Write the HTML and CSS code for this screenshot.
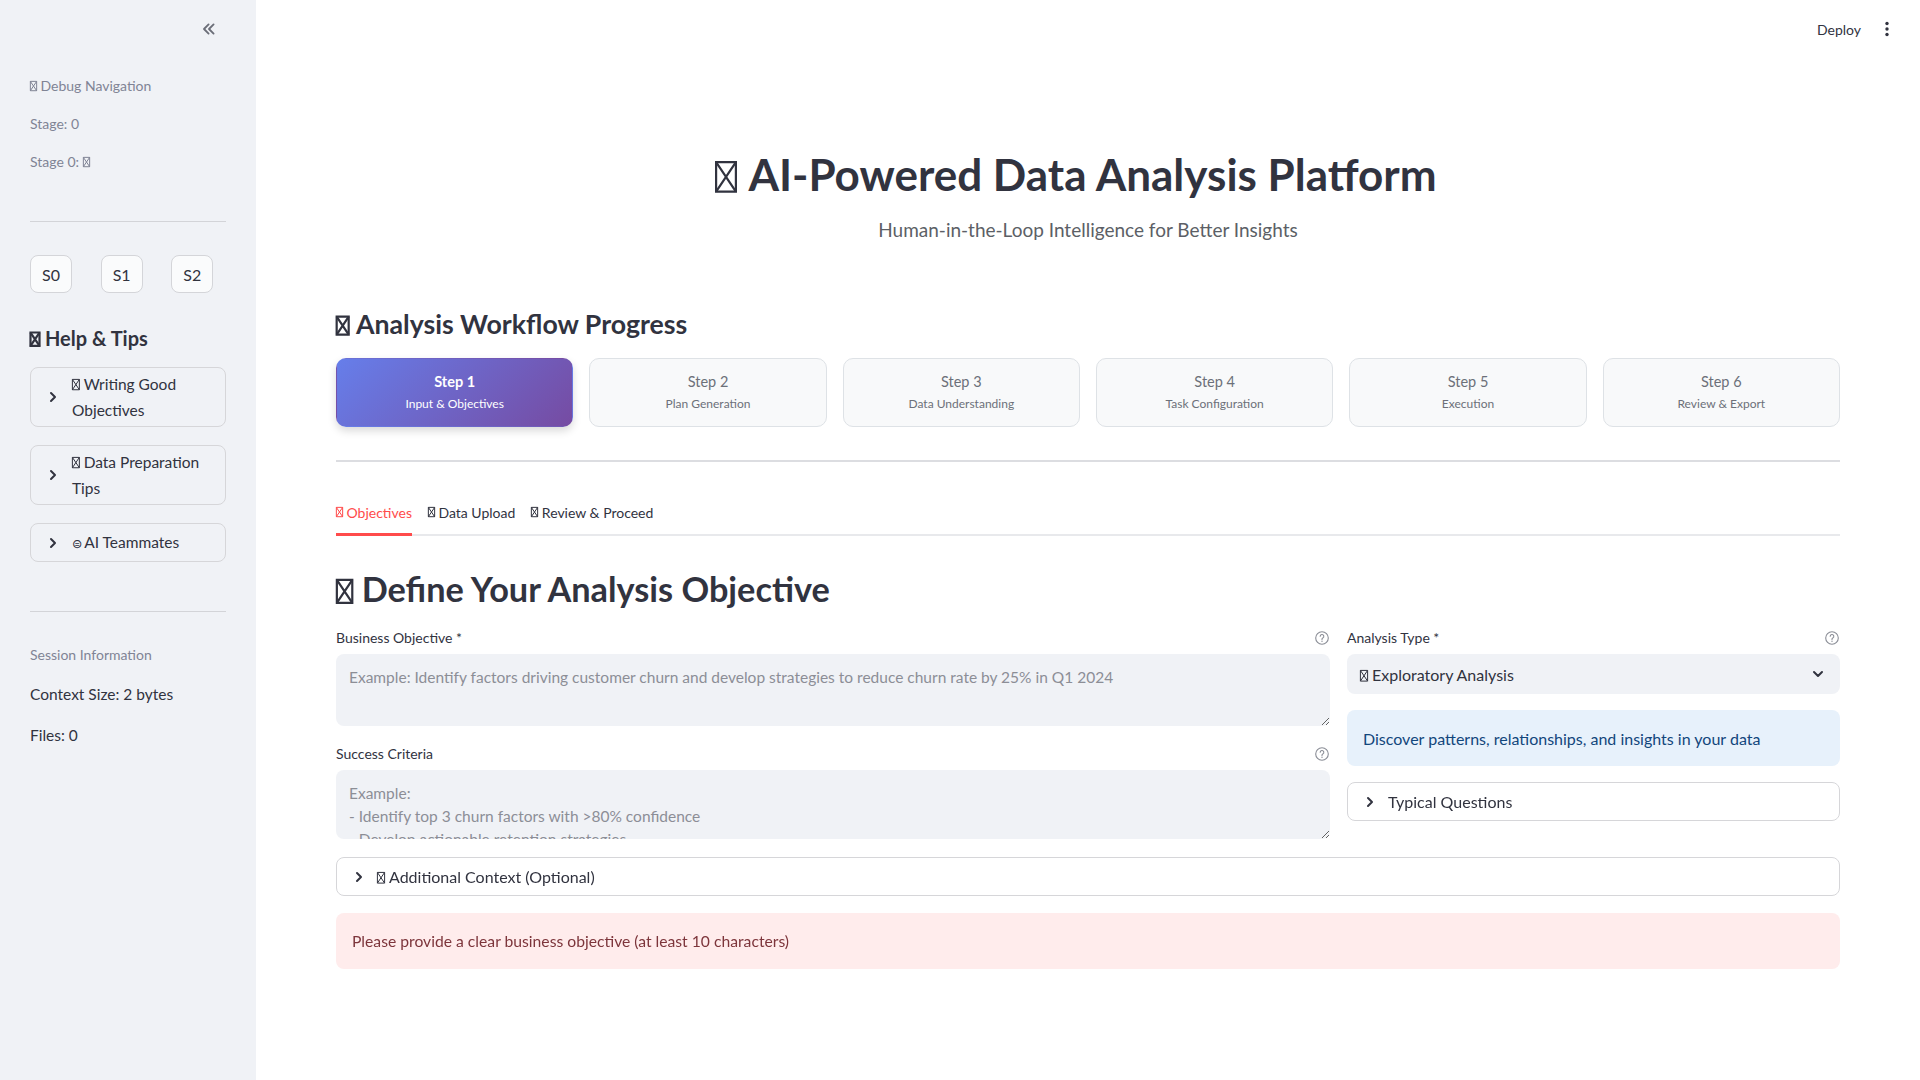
FILE: index.html
```html
<!DOCTYPE html>
<html lang="en">
<head>
<meta charset="utf-8">
<title>AI-Powered Data Analysis Platform</title>
<link rel="stylesheet" href="styles.css">
</head>
<body>
<div class="app">
  <aside class="sidebar">
    <div class="sb-top">
      <svg class="collapse" viewBox="0 0 24 24" width="20" height="20"><path d="M11.5 6.5 6 12l5.5 5.5M17.5 6.5 12 12l5.5 5.5" fill="none" stroke="currentColor" stroke-width="2.2" stroke-linecap="round" stroke-linejoin="round"/></svg>
    </div>
    <div class="sb-body">
      <p class="caption first"><span class="tofu"><svg viewBox="0 0 10 14" preserveAspectRatio="none"><rect x="0.5" y="0.5" width="9" height="13"/><path d="M0.5 0.5 9.5 13.5M9.5 0.5 0.5 13.5"/></svg></span>Debug Navigation</p>
      <p class="caption">Stage: 0</p>
      <p class="caption">Stage 0: <span class="tofu"><svg viewBox="0 0 10 14" preserveAspectRatio="none"><rect x="0.5" y="0.5" width="9" height="13"/><path d="M0.5 0.5 9.5 13.5M9.5 0.5 0.5 13.5"/></svg></span></p>
      <hr class="sb-hr first-hr">
      <div class="btn-row">
        <div class="btn-col"><button class="btn">S0</button></div>
        <div class="btn-col"><button class="btn">S1</button></div>
        <div class="btn-col"><button class="btn">S2</button></div>
      </div>
      <h3 class="sb-h3"><span class="tofu bold"><svg viewBox="0 0 10 14" preserveAspectRatio="none"><rect x="0.5" y="0.5" width="9" height="13"/><path d="M0.5 0.5 9.5 13.5M9.5 0.5 0.5 13.5"/></svg></span>Help &amp; Tips</h3>
      <div class="sb-exp">
        <div class="exp"><svg class="chev" viewBox="0 0 16 16"><path d="M6 4l4 4-4 4" fill="none" stroke="currentColor" stroke-width="2" stroke-linecap="round" stroke-linejoin="round"/></svg><span class="exp-label"><span class="tofu"><svg viewBox="0 0 10 14" preserveAspectRatio="none"><rect x="0.5" y="0.5" width="9" height="13"/><path d="M0.5 0.5 9.5 13.5M9.5 0.5 0.5 13.5"/></svg></span>Writing Good Objectives</span></div>
        <div class="exp"><svg class="chev" viewBox="0 0 16 16"><path d="M6 4l4 4-4 4" fill="none" stroke="currentColor" stroke-width="2" stroke-linecap="round" stroke-linejoin="round"/></svg><span class="exp-label"><span class="tofu"><svg viewBox="0 0 10 14" preserveAspectRatio="none"><rect x="0.5" y="0.5" width="9" height="13"/><path d="M0.5 0.5 9.5 13.5M9.5 0.5 0.5 13.5"/></svg></span>Data Preparation Tips</span></div>
        <div class="exp"><svg class="chev" viewBox="0 0 16 16"><path d="M6 4l4 4-4 4" fill="none" stroke="currentColor" stroke-width="2" stroke-linecap="round" stroke-linejoin="round"/></svg><span class="exp-label"><span class="glyph">⊜</span>AI Teammates</span></div>
      </div>
      <hr class="sb-hr second-hr">
      <p class="caption session">Session Information</p>
      <p class="sb-text">Context Size: 2 bytes</p>
      <p class="sb-text">Files: 0</p>
    </div>
  </aside>

  <main class="main">
    <header class="topbar">
      <span class="deploy">Deploy</span>
      <svg class="menu" viewBox="0 0 4 16" width="4" height="16"><circle cx="2" cy="2.5" r="1.7"/><circle cx="2" cy="8" r="1.7"/><circle cx="2" cy="13.5" r="1.7"/></svg>
    </header>

    <div class="content">
      <h1 class="title"><span class="tofu bold"><svg viewBox="0 0 10 14" preserveAspectRatio="none"><rect x="0.5" y="0.5" width="9" height="13"/><path d="M0.5 0.5 9.5 13.5M9.5 0.5 0.5 13.5"/></svg></span>AI-Powered Data Analysis Platform</h1>
      <p class="subtitle">Human-in-the-Loop Intelligence for Better Insights</p>

      <h3 class="section"><span class="tofu bold"><svg viewBox="0 0 10 14" preserveAspectRatio="none"><rect x="0.5" y="0.5" width="9" height="13"/><path d="M0.5 0.5 9.5 13.5M9.5 0.5 0.5 13.5"/></svg></span>Analysis Workflow Progress</h3>

      <div class="steps">
        <div class="step active"><div class="step-n">Step 1</div><div class="step-t">Input &amp; Objectives</div></div>
        <div class="step"><div class="step-n">Step 2</div><div class="step-t">Plan Generation</div></div>
        <div class="step"><div class="step-n">Step 3</div><div class="step-t">Data Understanding</div></div>
        <div class="step"><div class="step-n">Step 4</div><div class="step-t">Task Configuration</div></div>
        <div class="step"><div class="step-n">Step 5</div><div class="step-t">Execution</div></div>
        <div class="step"><div class="step-n">Step 6</div><div class="step-t">Review &amp; Export</div></div>
      </div>

      <hr class="main-hr">

      <div class="tabs">
        <div class="tab active"><span class="tofu"><svg viewBox="0 0 10 14" preserveAspectRatio="none"><rect x="0.5" y="0.5" width="9" height="13"/><path d="M0.5 0.5 9.5 13.5M9.5 0.5 0.5 13.5"/></svg></span>Objectives</div>
        <div class="tab"><span class="tofu"><svg viewBox="0 0 10 14" preserveAspectRatio="none"><rect x="0.5" y="0.5" width="9" height="13"/><path d="M0.5 0.5 9.5 13.5M9.5 0.5 0.5 13.5"/></svg></span>Data Upload</div>
        <div class="tab"><span class="tofu"><svg viewBox="0 0 10 14" preserveAspectRatio="none"><rect x="0.5" y="0.5" width="9" height="13"/><path d="M0.5 0.5 9.5 13.5M9.5 0.5 0.5 13.5"/></svg></span>Review &amp; Proceed</div>
      </div>

      <h2 class="define"><span class="tofu bold"><svg viewBox="0 0 10 14" preserveAspectRatio="none"><rect x="0.5" y="0.5" width="9" height="13"/><path d="M0.5 0.5 9.5 13.5M9.5 0.5 0.5 13.5"/></svg></span>Define Your Analysis Objective</h2>

      <div class="cols">
        <div class="col-left">
          <div class="label-row"><span class="label">Business Objective *</span><svg class="help" viewBox="0 0 16 16"><circle cx="8" cy="8" r="6.3" fill="none" stroke="currentColor" stroke-width="1.1"/><path d="M6.2 6.3a1.8 1.8 0 1 1 2.6 1.6c-.55.3-.8.6-.8 1.2v.4" fill="none" stroke="currentColor" stroke-width="1.1" stroke-linecap="round"/><circle cx="8" cy="11.2" r=".7" fill="currentColor"/></svg></div>
          <textarea class="ta ta1" placeholder="Example: Identify factors driving customer churn and develop strategies to reduce churn rate by 25% in Q1 2024"></textarea>
          <div class="label-row second"><span class="label">Success Criteria</span><svg class="help" viewBox="0 0 16 16"><circle cx="8" cy="8" r="6.3" fill="none" stroke="currentColor" stroke-width="1.1"/><path d="M6.2 6.3a1.8 1.8 0 1 1 2.6 1.6c-.55.3-.8.6-.8 1.2v.4" fill="none" stroke="currentColor" stroke-width="1.1" stroke-linecap="round"/><circle cx="8" cy="11.2" r=".7" fill="currentColor"/></svg></div>
          <textarea class="ta ta2" placeholder="Example:&#10;- Identify top 3 churn factors with &gt;80% confidence&#10;- Develop actionable retention strategies&#10;- Create predictive model with &gt;85% accuracy"></textarea>
        </div>
        <div class="col-right">
          <div class="label-row"><span class="label">Analysis Type *</span><svg class="help" viewBox="0 0 16 16"><circle cx="8" cy="8" r="6.3" fill="none" stroke="currentColor" stroke-width="1.1"/><path d="M6.2 6.3a1.8 1.8 0 1 1 2.6 1.6c-.55.3-.8.6-.8 1.2v.4" fill="none" stroke="currentColor" stroke-width="1.1" stroke-linecap="round"/><circle cx="8" cy="11.2" r=".7" fill="currentColor"/></svg></div>
          <div class="select"><span><span class="tofu"><svg viewBox="0 0 10 14" preserveAspectRatio="none"><rect x="0.5" y="0.5" width="9" height="13"/><path d="M0.5 0.5 9.5 13.5M9.5 0.5 0.5 13.5"/></svg></span>Exploratory Analysis</span><svg class="chev-down" viewBox="0 0 16 16"><path d="M4 6l4 4 4-4" fill="none" stroke="currentColor" stroke-width="2" stroke-linecap="round" stroke-linejoin="round"/></svg></div>
          <div class="info">Discover patterns, relationships, and insights in your data</div>
          <div class="exp main-exp"><svg class="chev" viewBox="0 0 16 16"><path d="M6 4l4 4-4 4" fill="none" stroke="currentColor" stroke-width="2" stroke-linecap="round" stroke-linejoin="round"/></svg><span class="exp-label">Typical Questions</span></div>
        </div>
      </div>

      <div class="exp main-exp wide"><svg class="chev" viewBox="0 0 16 16"><path d="M6 4l4 4-4 4" fill="none" stroke="currentColor" stroke-width="2" stroke-linecap="round" stroke-linejoin="round"/></svg><span class="exp-label"><span class="tofu"><svg viewBox="0 0 10 14" preserveAspectRatio="none"><rect x="0.5" y="0.5" width="9" height="13"/><path d="M0.5 0.5 9.5 13.5M9.5 0.5 0.5 13.5"/></svg></span>Additional Context (Optional)</span></div>

      <div class="error">Please provide a clear business objective (at least 10 characters)</div>
    </div>
  </main>
</div>
</body>
</html>
```

FILE: styles.css
```css
* { box-sizing: border-box; }
html, body { margin: 0; padding: 0; }
body {
  font-family: Lato, "Noto Sans", sans-serif;
  color: #31333f;
  background: #ffffff;
  width: 1920px;
  height: 1080px;
  overflow: hidden;
}
p, h1, h2, h3 { margin: 0; }

.app { display: flex; height: 1080px; }

/* tofu glyph boxes */
.tofu {
  display: inline-block;
  width: 0.5em;
  height: 0.72em;
  margin-right: 0.25em;
  vertical-align: -0.04em;
}
.tofu svg { display: block; width: 100%; height: 100%; overflow: visible; }
.tofu rect, .tofu path { fill: none; stroke: currentColor; stroke-width: 1; vector-effect: non-scaling-stroke; }
.tofu.bold rect, .tofu.bold path { stroke-width: 2.2; }
.glyph { margin-right: 0.15em; font-family: "DejaVu Sans", sans-serif; font-size: 0.8em; }

/* sidebar */
.sidebar {
  width: 256px;
  flex: none;
  background: #f0f2f6;
  height: 1080px;
}
.sb-top {
  height: 58px;
  display: flex;
  align-items: center;
  justify-content: flex-end;
  padding-right: 37px;
}
.collapse { color: #6b6e78; }
.sb-body { padding: 0 30px; display: flex; flex-direction: column; }
.caption {
  font-size: 14px;
  line-height: 21px;
  color: #808495;
  margin-top: 17px;
}
.caption.first { margin-top: 17px; }
.sb-hr {
  border: none;
  border-top: 1px solid #d3d4d8;
  margin: 0;
  width: 100%;
}
.first-hr { margin-top: 49px; }
.btn-row {
  display: grid;
  grid-template-columns: repeat(3, 1fr);
  column-gap: 16px;
  margin-top: 33px;
}
.btn {
  height: 38px;
  padding: 0 11px;
  font-family: inherit;
  font-size: 16px;
  color: #31333f;
  background: #fafbfc;
  border: 1px solid #d4d5d9;
  border-radius: 8px;
}
.sb-h3 {
  font-size: 20px;
  font-weight: 700;
  line-height: 24px;
  margin-top: 33px;
}
.sb-exp { display: flex; flex-direction: column; gap: 18px; margin-top: 17px; }

.exp {
  display: flex;
  align-items: center;
  border: 1px solid #d6d6d9;
  border-radius: 8px;
  padding: 3px 16px 3px 14px;
  min-height: 39px;
  font-size: 16px;
  line-height: 26px;
}
.sidebar .exp { font-size: 15.5px; }
.chev { width: 16px; height: 16px; flex: none; margin-right: 11px; color: #31333f; }
.exp-label { flex: 1; }

.second-hr { margin-top: 49px; }
.caption.session { margin-top: 32px; }
.sb-text { font-size: 15.5px; line-height: 24px; margin-top: 17px; }

/* main */
.main { flex: 1; position: relative; }
.topbar {
  position: absolute;
  top: 0; right: 0;
  height: 58px;
  display: flex;
  align-items: center;
  gap: 24px;
  padding-right: 31px;
}
.deploy { font-size: 14px; color: #31333f; }
.menu { fill: #31333f; }

.content {
  padding: 148px 80px 0 80px;
  display: flex;
  flex-direction: column;
}
.title {
  font-size: 44px;
  font-weight: 700;
  line-height: 53px;
  text-align: center;
  padding-right: 24px;
}
.subtitle {
  font-size: 19px;
  line-height: 27px;
  color: #5c5f66;
  text-align: center;
  margin-top: 15px;
}
.section {
  font-size: 26.7px;
  font-weight: 700;
  line-height: 34px;
  margin-top: 64px;
}
.steps {
  display: grid;
  grid-template-columns: repeat(6, 1fr);
  gap: 16px;
  margin-top: 17px;
}
.step {
  height: 69px;
  border-radius: 10px;
  background: #f8f9fa;
  border: 1px solid #dee2e6;
  color: #6c7079;
  text-align: center;
  padding-top: 14px;
}
.step-n { font-size: 14.5px; line-height: 18px; }
.step-t { font-size: 12px; line-height: 16px; margin-top: 5px; }
.step.active {
  background: linear-gradient(135deg, #667eea 0%, #764ba2 100%);
  border-color: transparent;
  color: #ffffff;
  box-shadow: 0 4px 8px rgba(0, 0, 0, 0.15);
}
.step.active .step-n { font-weight: 700; }

.main-hr {
  border: none;
  border-top: 2px solid #dcdde1;
  margin: 33px 0 0 0;
  width: 100%;
}

.tabs {
  display: flex;
  gap: 16px;
  border-bottom: 2px solid #e8e9ec;
  margin-top: 32px;
  height: 42px;
  align-items: stretch;
}
.tab {
  font-size: 14px;
  display: flex;
  align-items: center;
  padding-bottom: 3px;
  margin-bottom: -2px;
  border-bottom: 3px solid transparent;
  color: #31333f;
}
.tab.active { color: #ff4b4b; border-bottom-color: #ff4b4b; }

.define {
  font-size: 34.3px;
  font-weight: 700;
  line-height: 43px;
  margin-top: 31px;
}

.cols {
  display: grid;
  grid-template-columns: 994px 1fr;
  gap: 17px;
  margin-top: 17px;
  align-items: start;
}
.col-left, .col-right { display: flex; flex-direction: column; }
.label-row {
  display: flex;
  align-items: center;
  justify-content: space-between;
  height: 21px;
  margin-bottom: 6px;
}
.label-row.second { margin-top: 17px; }
.label { font-size: 14px; color: #31333f; }
.help { width: 16px; height: 16px; color: #8a8d96; margin-right: 0; }

.ta {
  display: block;
  width: 100%;
  border: none;
  outline: none;
  background: #f0f2f6;
  border-radius: 8px;
  font-family: inherit;
  font-size: 15.5px;
  line-height: 23px;
  padding: 12px 13px;
  color: #31333f;
  resize: vertical;
}
.ta::placeholder { color: #8c8e96; opacity: 1; }
.ta1 { height: 72px; }
.ta2 { height: 69px; padding-top: 12px; }

.select {
  display: flex;
  align-items: center;
  justify-content: space-between;
  height: 40px;
  background: #f0f2f6;
  border-radius: 8px;
  padding: 0 14px 0 13px;
  font-size: 16px;
}
.chev-down { width: 16px; height: 16px; color: #31333f; }
.info {
  margin-top: 16px;
  background: #e7f1fb;
  color: #12467c;
  border-radius: 8px;
  height: 56px;
  display: flex;
  align-items: center;
  padding: 0 16px;
  font-size: 16px;
}
.col-right .main-exp { margin-top: 16px; }
.main-exp { min-height: 39px; }
.main-exp.wide { margin-top: 18px; }
.main-exp .chev { margin-right: 10px; }

.error {
  margin-top: 17px;
  height: 56px;
  background: #ffecec;
  color: #7d353b;
  border-radius: 8px;
  display: flex;
  align-items: center;
  padding: 0 16px;
  font-size: 15.7px;
}
```
